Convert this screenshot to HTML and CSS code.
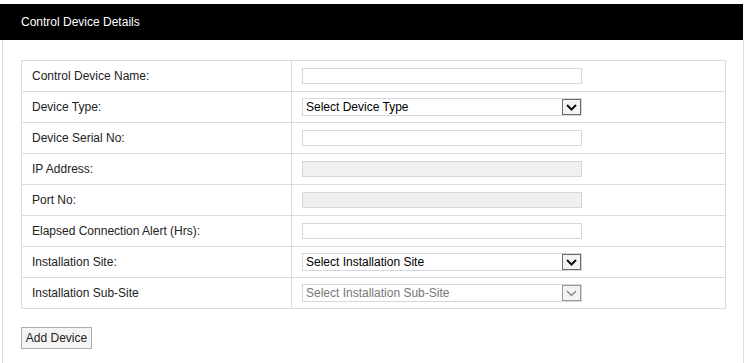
FILE: index.html
```html
<!DOCTYPE html>
<html>
<head>
<meta charset="utf-8">
<link rel="stylesheet" href="styles.css">
</head>
<body>
<div class="page">
  <div class="header">Control Device Details</div>
  <div class="panel">
    <table class="form">
      <tr><td class="label">Control Device Name:</td><td class="field"><input class="text" type="text"></td></tr>
      <tr><td class="label">Device Type:</td><td class="field"><div class="sel"><span class="sel-text">Select Device Type</span><span class="arrow"><svg width="11" height="7" viewBox="0 0 11 7"><path d="M1 1 L5.5 5.5 L10 1" fill="none" stroke="#111" stroke-width="2"/></svg></span></div></td></tr>
      <tr><td class="label">Device Serial No:</td><td class="field"><input class="text" type="text"></td></tr>
      <tr><td class="label">IP Address:</td><td class="field"><input class="text disabled" type="text" disabled></td></tr>
      <tr><td class="label">Port No:</td><td class="field"><input class="text disabled" type="text" disabled></td></tr>
      <tr><td class="label">Elapsed Connection Alert (Hrs):</td><td class="field"><input class="text" type="text"></td></tr>
      <tr><td class="label">Installation Site:</td><td class="field"><div class="sel"><span class="sel-text">Select Installation Site</span><span class="arrow"><svg width="11" height="7" viewBox="0 0 11 7"><path d="M1 1 L5.5 5.5 L10 1" fill="none" stroke="#111" stroke-width="2"/></svg></span></div></td></tr>
      <tr><td class="label">Installation Sub-Site</td><td class="field"><div class="sel sel-disabled"><span class="sel-text">Select Installation Sub-Site</span><span class="arrow"><svg width="11" height="7" viewBox="0 0 11 7"><path d="M1 1 L5.5 5.5 L10 1" fill="none" stroke="#888" stroke-width="1.5"/></svg></span></div></td></tr>
    </table>
    <button class="btn">Add Device</button>
  </div>
</div>
</body>
</html>
```

FILE: styles.css
```css
html, body {
  margin: 0;
  padding: 0;
  background: #fff;
  font-family: "Liberation Sans", Arial, sans-serif;
  font-size: 12px;
  color: #222;
}
.page {
  padding-top: 4px;
  height: 359px;
  display: flex;
  flex-direction: column;
}
.header {
  width: 722px;
  height: 36px;
  line-height: 36px;
  background: #000;
  color: #fff;
  padding-left: 21px;
  font-size: 12px;
}
.panel {
  flex: 1;
  margin-left: 2px;
  border-left: 1px solid #ddd;
  border-right: 1px solid #ddd;
  padding: 20px 0 0 18px;
  box-sizing: border-box;
  width: 742px;
}
.form {
  border-collapse: collapse;
  width: 705px;
}
.form td {
  border: 1px solid #dcdcdc;
  height: 31px;
  padding: 0 0 0 10px;
  box-sizing: border-box;
  vertical-align: middle;
}
.form td.label {
  width: 270px;
}
.text {
  display: block;
  width: 280px;
  height: 16px;
  box-sizing: border-box;
  border: 1px solid #d3d7e4;
  padding: 0;
  margin: 0;
  background: #fff;
}
.text.disabled {
  background: #f1f0f1;
}
.sel {
  width: 280px;
  height: 18px;
  box-sizing: border-box;
  border: 1px solid #d3d7e4;
  position: relative;
  display: flex;
  align-items: center;
  padding-left: 3px;
  font-size: 12px;
  color: #000;
}
.sel-disabled {
  color: #777;
}
.arrow {
  position: absolute;
  right: 0;
  top: 0;
  width: 19px;
  height: 16px;
  box-sizing: border-box;
  border: 1px solid #6b6b6b;
  background: #f4f4f4;
  display: flex;
  align-items: center;
  justify-content: center;
}
.sel-disabled .arrow {
  border-color: #999;
}
.btn {
  display: block;
  margin-top: 18px;
  height: 22px;
  width: 71px;
  padding: 0;
  font-family: "Liberation Sans", Arial, sans-serif;
  font-size: 12px;
  color: #222;
  background: #f4f4f4;
  border: 1px solid #adadad;
  border-radius: 0;
}
```
